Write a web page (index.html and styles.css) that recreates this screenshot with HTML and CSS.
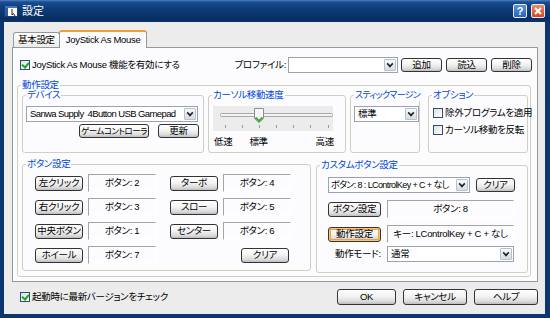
FILE: index.html
```html
<!DOCTYPE html>
<html lang="ja">
<head>
    <meta charset="UTF-8">
    <title>設定</title>
    <link rel="stylesheet" href="styles.css">
</head>
<body>
<div class="window">
    <div class="titlebar">
        <svg class="app-icon" width="14" height="12" viewBox="0 0 14 12">
            <rect x="0.5" y="0.5" width="13" height="11" fill="#fff" stroke="#1b3c72"/>
            <rect x="1" y="1" width="12" height="2" fill="#3d72c8"/>
            <rect x="1" y="3" width="3" height="8" fill="#2a5aa8"/>
            <path d="M8 4 L8 10 L9.5 8.5 L11 11" stroke="#222" fill="none"/>
        </svg>
        <span class="title">設定</span>
        <div class="caption-btns">
            <span class="cap-btn help">?</span>
            <span class="cap-btn close">
                <svg width="8" height="8" viewBox="0 0 8 8"><path d="M1 1 L7 7 M7 1 L1 7" stroke="#fff" stroke-width="2"/></svg>
            </span>
        </div>
    </div>

    <div class="client">
        <div class="tabs">
            <div class="tab">基本設定</div>
            <div class="tab active">JoyStick As Mouse</div>
        </div>

        <div class="pane">
            <div class="top-row">
                <label class="check"><span class="box checked"></span>JoyStick As Mouse 機能を有効にする</label>
                <span class="profile-label">プロファイル:</span>
                <div class="combo profile"><span class="combo-text"></span><span class="drop"></span></div>
                <button class="btn top-btn">追加</button>
                <button class="btn top-btn">読込</button>
                <button class="btn top-btn">削除</button>
            </div>

            <div class="group outer">
                <div class="group-title">動作設定</div>

                <div class="group-row first">
                    <div class="group device">
                        <div class="group-title">デバイス</div>
                        <div class="combo device-combo"><span class="combo-text">Sanwa Supply&nbsp; 4Button USB Gamepad</span><span class="drop"></span></div>
                        <div class="device-btns">
                            <button class="btn game-btn">ゲームコントローラ</button>
                            <button class="btn refresh-btn">更新</button>
                        </div>
                    </div>

                    <div class="group speed">
                        <div class="group-title">カーソル移動速度</div>
                        <div class="slider">
                            <svg width="120" height="25" viewBox="0 0 120 25">
                                <rect x="7.5" y="7.5" width="112" height="3" rx="1" fill="#f4f4f4" stroke="#a9a9a9"/>
                                <path d="M41.5 2.5 H50.5 V12.5 L46 16.5 L41.5 12.5 Z" fill="#f7f7f7" stroke="#8f8f8f"/>
                                <path d="M42.5 11.5 L46 15 L49.5 11.5" fill="none" stroke="#3fae3f" stroke-width="2"/>
                                <g stroke="#9a9a9a">
                                    <path d="M12.5 19 V22 M29.5 19 V22 M46.5 19 V22 M63.5 19 V22 M80.5 19 V22 M97.5 19 V22 M115.5 19 V22"/>
                                </g>
                            </svg>
                        </div>
                        <div class="speed-labels">
                            <span class="slow">低速</span>
                            <span class="normal">標準</span>
                            <span class="fast">高速</span>
                        </div>
                    </div>

                    <div class="group margin">
                        <div class="group-title">スティックマージン</div>
                        <div class="combo margin-combo"><span class="combo-text">標準</span><span class="drop"></span></div>
                    </div>

                    <div class="group option">
                        <div class="group-title">オプション</div>
                        <label class="check opt"><span class="box"></span>除外プログラムを適用</label>
                        <label class="check opt"><span class="box"></span>カーソル移動を反転</label>
                    </div>
                </div>

                <div class="group-row second">
                    <div class="group buttons">
                        <div class="group-title">ボタン設定</div>
                        <div class="button-grid">
                            <button class="btn map-btn">左クリック</button>
                            <div class="field">ボタン: 2</div>
                            <button class="btn map-btn">ターボ</button>
                            <div class="field">ボタン: 4</div>

                            <button class="btn map-btn">右クリック</button>
                            <div class="field">ボタン: 3</div>
                            <button class="btn map-btn">スロー</button>
                            <div class="field">ボタン: 5</div>

                            <button class="btn map-btn">中央ボタン</button>
                            <div class="field">ボタン: 1</div>
                            <button class="btn map-btn">センター</button>
                            <div class="field">ボタン: 6</div>

                            <button class="btn map-btn">ホイール</button>
                            <div class="field">ボタン: 7</div>
                            <span></span>
                            <button class="btn map-btn clear-btn">クリア</button>
                        </div>
                    </div>

                    <div class="group custom">
                        <div class="group-title">カスタムボタン設定</div>
                        <div class="custom-row combo-row">
                            <div class="combo custom-combo"><span class="combo-text">ボタン: 8 : LControlKey + C + なし</span><span class="drop"></span></div>
                            <button class="btn small-clear">クリア</button>
                        </div>
                        <div class="custom-row">
                            <button class="btn custom-btn">ボタン設定</button>
                            <div class="field wide">ボタン: 8</div>
                        </div>
                        <div class="custom-row">
                            <button class="btn custom-btn focused">動作設定</button>
                            <div class="field wide">キー: LControlKey + C + なし</div>
                        </div>
                        <div class="custom-row mode-row">
                            <span class="mode-label">動作モード:</span>
                            <div class="combo mode-combo"><span class="combo-text">通常</span><span class="drop"></span></div>
                        </div>
                    </div>
                </div>
            </div>
        </div>

        <div class="bottom-row">
            <label class="check"><span class="box checked"></span>起動時に最新バージョンをチェック</label>
            <button class="btn dlg-btn ok">OK</button>
            <button class="btn dlg-btn">キャンセル</button>
            <button class="btn dlg-btn">ヘルプ</button>
        </div>
    </div>
</div>
</body>
</html>
```

FILE: styles.css
```css
* {
    box-sizing: border-box;
}
body {
    margin: 0;
    font-family: "Liberation Sans", "Noto Sans CJK JP", sans-serif;
    font-size: 9.5px;
    letter-spacing: -0.3px;
    font-feature-settings: "palt";
    color: #000;
}
.window {
    width: 550px;
    height: 318px;
    display: flex;
    flex-direction: column;
    background: #0c3670;
}

/* title bar */
.titlebar {
    height: 22px;
    display: flex;
    align-items: center;
    padding: 0 5px 0 4px;
    background: linear-gradient(#4d82c4 0, #1a4d90 2px, #0d3c7a 40%, #082e64 85%, #0b3569 100%);
    color: #fff;
}
.title {
    margin-left: 4px;
    font-size: 11px;
    line-height: 12px;
    letter-spacing: 0;
}
.caption-btns {
    margin-left: auto;
    display: flex;
    gap: 4px;
}
.cap-btn {
    width: 14px;
    height: 14px;
    border: 1px solid #e8eef8;
    border-radius: 2px;
    display: flex;
    align-items: center;
    justify-content: center;
    color: #fff;
    font-family: "Liberation Sans", sans-serif;
    font-weight: bold;
    font-size: 11px;
}
.help {
    background: linear-gradient(#5a8fd8, #2a62b8);
}
.close {
    background: linear-gradient(#ef8a62, #d6471e);
}

/* client area */
.client {
    flex: 1;
    margin: 0 5px 4px 4px;
    padding: 8px 7px 0 8px;
    background: #ececec;
}
.tabs {
    height: 17px;
    display: flex;
    align-items: flex-end;
    padding-left: 1px;
}
.tab {
    height: 15px;
    line-height: 13px;
    padding: 0 4px;
    border: 1px solid #919b9c;
    border-bottom: none;
    border-radius: 3px 3px 0 0;
    background: linear-gradient(#ffffff, #ecebe6);
    white-space: nowrap;
}
.tab.active {
    height: 18px;
    margin-left: -1px;
    margin-bottom: -1px;
    position: relative;
    border-top: 2px solid #f0a030;
    background: #fcfcfe;
    line-height: 15px;
    padding: 0 6px;
}
.pane {
    height: 235px;
    border: 1px solid #919b9c;
    background: #fcfcfe;
    padding: 9px 5px 0 4px;
}
.top-row {
    height: 16px;
    display: flex;
    align-items: center;
    padding-left: 3px;
}
.profile-label {
    margin-left: auto;
    line-height: 12px;
}
.combo {
    height: 16px;
    display: flex;
    align-items: center;
    background: #fff;
    border: 1px solid #9aa4b0;
    padding: 1px;
}
.combo-text {
    flex: 1;
    min-width: 0;
    padding-left: 2px;
    line-height: 12px;
    white-space: nowrap;
    overflow: hidden;
}
.drop {
    flex-shrink: 0;
    width: 12px;
    height: 12px;
    border: 1px solid #b8c2cf;
    border-radius: 1px;
    background: linear-gradient(#f6f8fb, #d6dce4);
    position: relative;
}
.drop::after {
    content: "";
    position: absolute;
    left: 2px;
    top: 1px;
    width: 4px;
    height: 4px;
    border-right: 2px solid #222;
    border-bottom: 2px solid #222;
    transform: rotate(45deg) scale(0.8);
}
.profile {
    width: 110px;
    margin-left: 2px;
}
.btn {
    height: 14px;
    padding: 0;
    font: inherit;
    letter-spacing: inherit;
    font-feature-settings: inherit;
    line-height: 12px;
    white-space: nowrap;
    color: #000;
    border: 1px solid #333;
    border-radius: 3px;
    background: linear-gradient(#ffffff, #f3f3f3 45%, #dcdcdc 80%, #bdbdbd);
}
.top-btn {
    width: 41px;
    margin-left: 4px;
}
.top-btn:first-of-type {
    margin-left: 3px;
}

/* checkboxes */
.check {
    display: flex;
    align-items: center;
    line-height: 12px;
    white-space: nowrap;
}
.box {
    flex-shrink: 0;
    width: 10px;
    height: 10px;
    margin-right: 2px;
    border: 1px solid #2c4f7a;
    background: linear-gradient(135deg, #e0e0dc, #ffffff);
    position: relative;
}
.box.checked::after {
    content: "";
    position: absolute;
    left: 2px;
    top: 0px;
    width: 3px;
    height: 5px;
    border-right: 2px solid #21a121;
    border-bottom: 2px solid #21a121;
    transform: rotate(40deg);
}

/* group boxes */
.group {
    border: 1px solid #d0d0bf;
    border-radius: 3px;
    padding-left: var(--pl, 4px);
}
.group-title {
    width: fit-content;
    margin: -7px 0 0 calc(3px - var(--pl, 4px));
    padding: 0 1px;
    line-height: 12px;
    color: #0046d5;
    background: #fcfcfe;
    white-space: nowrap;
}
.outer {
    --pl: 4px;
    margin: 12px 1px 0 0;
    padding-right: 2px;
    padding-bottom: 3px;
}
.group-row {
    display: flex;
}
.group-row.first {
    margin-top: 4px;
    gap: 4px;
}
.group-row.second {
    margin-top: 11px;
    align-items: flex-start;
    gap: 5px;
}
.first .group {
    height: 58px;
}
.device {
    --pl: 3px;
    width: 182px;
}
.device-combo {
    width: 172px;
    margin-top: 5px;
}
.device-combo .combo-text {
    letter-spacing: -0.6px;
}
.device-btns {
    display: flex;
    justify-content: flex-end;
    gap: 9px;
    margin-top: 2px;
    padding-right: 4px;
}
.game-btn {
    width: 70px;
    font-size: 8.5px;
    letter-spacing: -0.5px;
}
.refresh-btn {
    width: 41px;
}
.speed {
    width: 138px;
}
.slider {
    width: 120px;
    height: 25px;
    margin-top: 5px;
    background: #ececec;
}
.slider svg {
    display: block;
}
.speed-labels {
    display: flex;
    width: 121px;
    margin-top: 6px;
    line-height: 10px;
}
.slow {
    margin-left: 1px;
}
.normal {
    margin-left: 17px;
}
.fast {
    margin-left: auto;
}
.margin {
    --pl: 3px;
    width: 70px;
}
.margin .group-title {
    font-size: 9px;
    letter-spacing: -0.7px;
}
.margin-combo {
    width: 65px;
    margin-top: 5px;
}
.option {
    width: 100px;
    margin-left: 4px;
}
.opt {
    height: 17px;
}
.opt:first-of-type {
    margin-top: 3px;
}

.buttons {
    --pl: 12px;
    width: 289px;
    height: 107px;
}
.button-grid {
    display: grid;
    grid-template-columns: 48px 68px 57px 68px;
    grid-auto-rows: 18px;
    column-gap: 5px;
    row-gap: 6px;
    margin-top: 4px;
    align-items: center;
}
.map-btn {
    width: 48px;
    height: 15px;
    justify-self: end;
}
.clear-btn {
    margin-right: 2px;
}
.field {
    height: 18px;
    line-height: 16px;
    text-align: center;
    border-top: 1px solid #a5a5a5;
    border-left: 1px solid #a5a5a5;
    border-bottom: 1px solid #fff;
    border-right: 1px solid #fff;
    white-space: nowrap;
}
.custom {
    --pl: 11px;
    width: 212px;
    height: 108px;
    margin-top: 1px;
}
.custom-row {
    display: flex;
    align-items: center;
    gap: 6px;
    height: 18px;
    margin-top: 7px;
}
.combo-row {
    height: 16px;
    margin-top: 6px;
}
.custom-combo {
    width: 142px;
}
.custom-combo .combo-text {
    padding-left: 1px;
    font-size: 9px;
    letter-spacing: -0.6px;
}
.small-clear {
    width: 39px;
}
.custom-btn {
    width: 53px;
    height: 15px;
}
.custom-btn.focused {
    box-shadow: inset 0 0 0 1px #f6c67a, inset 0 0 0 2px #eea23e;
}
.field.wide {
    width: 127px;
}
.mode-row {
    height: 16px;
    margin-top: 3px;
}
.mode-label {
    width: 53px;
    padding-left: 7px;
    line-height: 12px;
    white-space: nowrap;
}
.mode-combo {
    width: 127px;
}

/* bottom */
.bottom-row {
    display: flex;
    align-items: center;
    height: 16px;
    margin-top: 7px;
}
.bottom-row .check {
    margin-left: 8px;
    margin-right: auto;
}
.dlg-btn {
    width: 64px;
    height: 16px;
    margin-left: 7px;
}
.dlg-btn.ok {
    width: 59px;
}
```
